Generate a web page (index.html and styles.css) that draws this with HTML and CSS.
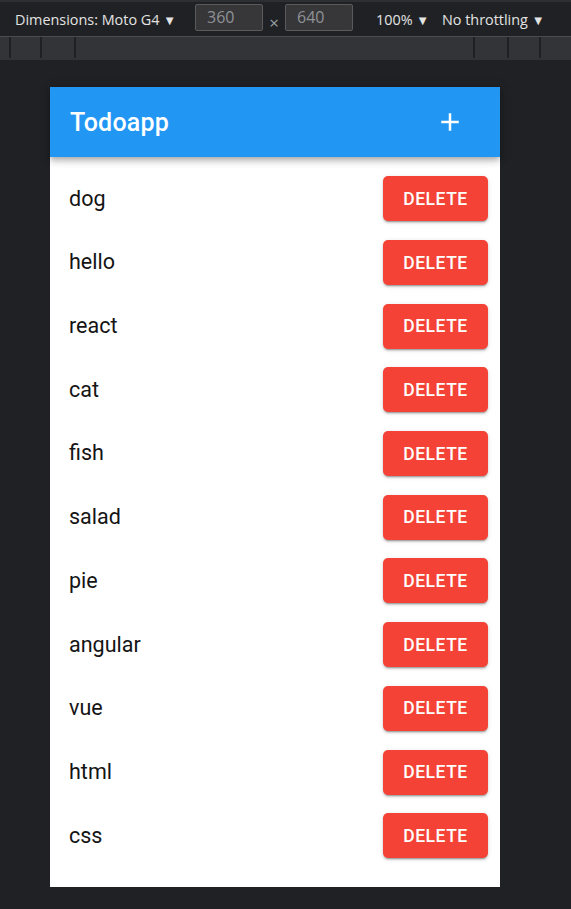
FILE: index.html
```html
<!DOCTYPE html>
<html>
<head>
<meta charset="utf-8">
<link rel="stylesheet" href="styles.css">
</head>
<body>
<div class="devtools">
  <div class="toolbar">
    <span class="tb-item dims">Dimensions: Moto G4 <span class="caret">▼</span></span>
    <span class="tb-input">360</span>
    <span class="times">×</span>
    <span class="tb-input">640</span>
    <span class="tb-item zoom">100% <span class="caret">▼</span></span>
    <span class="tb-item throttle">No throttling <span class="caret">▼</span></span>
  </div>
  <div class="ruler">
    <span class="tick t1"></span>
    <span class="tick t2"></span>
    <span class="tick t3"></span>
    <span class="spacer"></span>
    <span class="tick t4"></span>
    <span class="tick t5"></span>
    <span class="tick t6"></span>
  </div>
</div>
<div class="viewport">
  <div class="device">
    <header class="appbar">
      <h1 class="title">Todoapp</h1>
      <button class="add" aria-label="add">
        <svg viewBox="0 0 24 24" width="30" height="30"><path fill="#fff" d="M19 13h-6v6h-2v-6H5v-2h6V5h2v6h6v2z"/></svg>
      </button>
    </header>
    <ul class="list">
      <li class="item"><span class="label">dog</span><button class="del">Delete</button></li>
      <li class="item"><span class="label">hello</span><button class="del">Delete</button></li>
      <li class="item"><span class="label">react</span><button class="del">Delete</button></li>
      <li class="item"><span class="label">cat</span><button class="del">Delete</button></li>
      <li class="item"><span class="label">fish</span><button class="del">Delete</button></li>
      <li class="item"><span class="label">salad</span><button class="del">Delete</button></li>
      <li class="item"><span class="label">pie</span><button class="del">Delete</button></li>
      <li class="item"><span class="label">angular</span><button class="del">Delete</button></li>
      <li class="item"><span class="label">vue</span><button class="del">Delete</button></li>
      <li class="item"><span class="label">html</span><button class="del">Delete</button></li>
      <li class="item"><span class="label">css</span><button class="del">Delete</button></li>
    </ul>
  </div>
</div>
</body>
</html>
```

FILE: styles.css
```css
* { box-sizing: border-box; }
html, body {
  margin: 0;
  padding: 0;
  background: #202124;
  height: 100%;
  overflow: hidden;
}
.devtools {
  font-family: "Open Sans", "Noto Sans", sans-serif;
}
.toolbar {
  height: 37px;
  background: #202124;
  border-top: 2px solid #2e2f33;
  border-bottom: 1px solid #4a4b4e;
  display: flex;
  align-items: center;
  color: #e3e3e3;
  font-size: 14.4px;
  padding-left: 15px;
}
.caret { font-size: 13px; }
.tb-item { white-space: nowrap; }
.dims { width: 180px; }
.tb-input {
  width: 68px;
  height: 27px;
  background: #37373a;
  border: 1px solid #5a5a5d;
  border-radius: 2px;
  color: #8f9296;
  font-size: 16px;
  padding-left: 11px;
  line-height: 24px;
  margin-top: -3px;
}
.times {
  color: #9aa0a6;
  width: 22px;
  text-align: center;
  font-size: 17px;
  margin-top: 6px;
}
.zoom { margin-left: 23px; width: 66px; }
.ruler {
  height: 23px;
  background: #333438;
  display: flex;
}
.tick {
  width: 2px;
  height: 21px;
  background: #1f2023;
}
.t1 { margin-left: 9px; }
.t2 { margin-left: 29px; }
.t3 { margin-left: 32px; }
.spacer { flex: 1; }
.t5 { margin-left: 32px; }
.t6 { margin-left: 30px; margin-right: 30px; }

.viewport {
  padding: 27px 0 0 50px;
}
.device {
  width: 450px;
  height: 800px;
  background: #fff;
  font-family: Roboto, "Liberation Sans", sans-serif;
}
.appbar {
  height: 70px;
  background: #2196f3;
  display: flex;
  align-items: center;
  justify-content: space-between;
  padding: 0 35px 0 20px;
  color: #fff;
  position: relative;
  z-index: 1;
  box-shadow: 0 2px 5px -1px rgba(0,0,0,0.2), 0 5px 6px 0 rgba(0,0,0,0.14), 0 1px 12px 0 rgba(0,0,0,0.12);
}
.title {
  margin: 0;
  font-size: 25px;
  font-weight: 500;
  letter-spacing: 0.2px;
}
.add {
  background: none;
  border: 0;
  padding: 0;
  width: 30px;
  height: 30px;
  display: flex;
}
.list {
  list-style: none;
  margin: 0;
  padding: 10px 0 0 0;
}
.item {
  height: 63.7px;
  display: flex;
  align-items: center;
  justify-content: space-between;
  padding: 0 12px 0 19px;
}
.label {
  font-size: 21.5px;
  color: #141414;
  line-height: 1.5;
}
.del {
  width: 105px;
  height: 45px;
  border: 0;
  border-radius: 5px;
  background: #f44336;
  color: #fff;
  font-family: Roboto, "Liberation Sans", sans-serif;
  font-size: 17.5px;
  font-weight: 500;
  letter-spacing: 0.5px;
  text-transform: uppercase;
  padding: 0;
  box-shadow: 0 3px 1px -2px rgba(0,0,0,0.2), 0 2px 2px 0 rgba(0,0,0,0.14), 0 1px 5px 0 rgba(0,0,0,0.12);
}
```
